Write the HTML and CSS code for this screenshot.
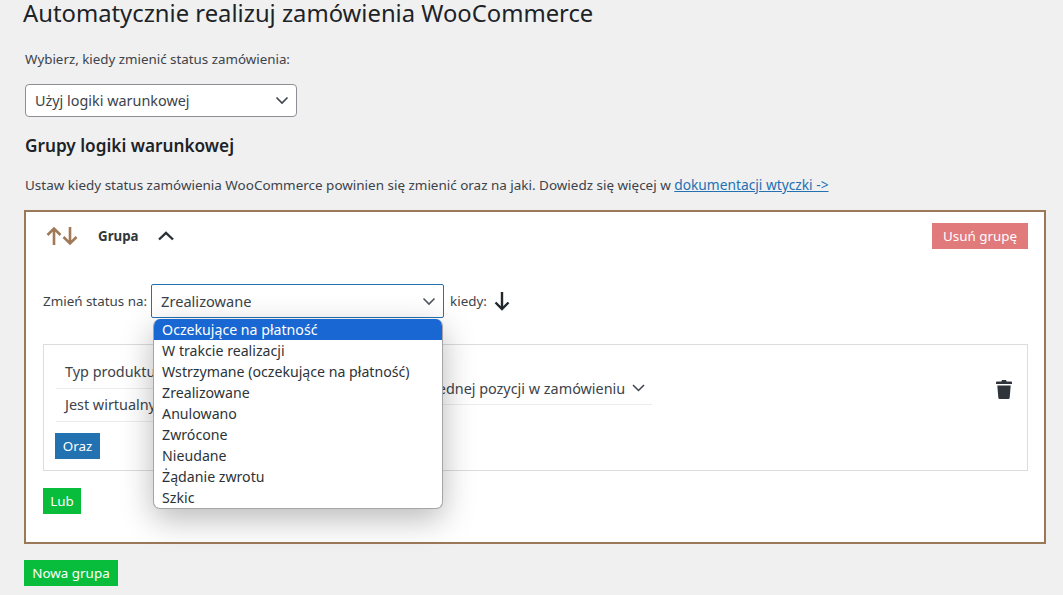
FILE: index.html
```html
<!DOCTYPE html>
<html lang="pl">
<head>
<meta charset="utf-8">
<title>Automatycznie realizuj zamówienia WooCommerce</title>
<link rel="stylesheet" href="styles.css">
</head>
<body>
<main class="page">
  <h1 class="title">Automatycznie realizuj zamówienia WooCommerce</h1>
  <p class="lead">Wybierz, kiedy zmienić status zamówienia:</p>
  <div class="select mode">
    <span>Użyj logiki warunkowej</span>
    <svg class="chev" width="14" height="9" viewBox="0 0 14 9"><path d="M1.500 1.500 7 7l5.500-5.500" fill="none" stroke="#3c434a" stroke-width="1.600"/></svg>
  </div>
  <h2 class="subtitle">Grupy logiki warunkowej</h2>
  <p class="intro">Ustaw kiedy status zamówienia WooCommerce powinien się zmienić oraz na jaki. Dowiedz się więcej w <a href="#">dokumentacji wtyczki -&gt;</a></p>

  <section class="group">
    <header class="group-head">
      <svg class="sort" width="34" height="20" viewBox="0 0 34 20"><path d="M9 19V2.500M2.500 9 9 2.500 15.500 9M25 1v16.500M18.500 11 25 17.500 31.500 11" fill="none" stroke="#a07a58" stroke-width="2.600"/></svg>
      <strong class="group-name">Grupa</strong>
      <svg class="collapse" width="16" height="10" viewBox="0 0 16 10"><path d="M1 8.500 8 1.800l7 6.700" fill="none" stroke="#2c3338" stroke-width="2.400"/></svg>
      <button class="btn danger">Usuń grupę</button>
    </header>

    <div class="status-row">
      <span>Zmień status na:</span>
      <div class="status-wrap">
        <div class="select status">
          <span>Zrealizowane</span>
          <svg class="chev" width="14" height="9" viewBox="0 0 14 9"><path d="M1.500 1.500 7 7l5.500-5.500" fill="none" stroke="#50575e" stroke-width="1.600"/></svg>
        </div>
        <ul class="menu">
          <li class="active">Oczekujące na płatność</li>
          <li>W trakcie realizacji</li>
          <li>Wstrzymane (oczekujące na płatność)</li>
          <li>Zrealizowane</li>
          <li>Anulowano</li>
          <li>Zwrócone</li>
          <li>Nieudane</li>
          <li>Żądanie zwrotu</li>
          <li>Szkic</li>
        </ul>
      </div>
      <span class="when">kiedy:</span>
      <svg class="down" width="16" height="20" viewBox="0 0 16 20"><path d="M8 1v17M1.500 11.500 8 18l6.500-6.500" fill="none" stroke="#23282d" stroke-width="2.400"/></svg>
    </div>

    <div class="rules">
      <div class="rules-main">
        <div class="rules-cols">
          <div class="conds">
            <div class="cond">Typ produktu</div>
            <div class="cond">Jest wirtualny</div>
          </div>
          <div class="qualifier">
            <span>w jednej pozycji w zamówieniu</span>
            <svg width="13" height="8" viewBox="0 0 13 8"><path d="M1 1l5.500 5.500L12 1" fill="none" stroke="#3c434a" stroke-width="1.500"/></svg>
          </div>
        </div>
        <button class="btn blue">Oraz</button>
      </div>
      <svg class="trash" width="16" height="19" viewBox="0 0 16 19"><path d="M6 0h4l.6 1.500H15a1 1 0 0 1 1 1V4H0V2.500a1 1 0 0 1 1-1h4.400z" fill="#2f343a"/><path d="M1.300 5.500h13.400l-1 12a1.500 1.500 0 0 1-1.500 1.500H3.800a1.500 1.500 0 0 1-1.500-1.500z" fill="#2f343a"/></svg>
    </div>

    <button class="btn green or">Lub</button>
  </section>

  <button class="btn green new">Nowa grupa</button>
</main>
</body>
</html>
```

FILE: styles.css
```css
* { box-sizing: border-box; }
html, body { margin: 0; height: 595px; overflow: hidden; background: #f0f0f1; }
body {
  font-family: "Noto Sans", "Open Sans", "Liberation Sans", sans-serif;
  font-size: 13.4px;
  color: #3c434a;
}
.page { padding: 0 17px 0 24px; }
.title {
  margin: 0 0 0 -1px;
  font-size: 23.8px;
  line-height: 26px;
  font-weight: 400;
  color: #1d2327;
}
.lead { margin: 23px 0 0 1px; line-height: 20px; font-size: 13.35px; }
.select {
  display: flex;
  align-items: center;
  justify-content: space-between;
  background: #fff;
  border-radius: 4px;
}
.mode {
  width: 272px;
  height: 33px;
  margin: 15px 0 0 1px;
  padding: 0 7px 0 9px;
  border: 1px solid #8c8f94;
  font-size: 14.4px;
}
.subtitle {
  margin: 17px 0 0 1px;
  font-size: 17.2px;
  line-height: 24px;
  font-weight: 600;
  color: #1d2327;
}
.intro { margin: 17px 0 0 1px; line-height: 20px; font-size: 13.46px; }
.intro a { color: #2271b1; font-size: 13.75px; }
.group {
  position: relative;
  width: 1022px;
  height: 334px;
  margin-top: 15px;
  padding: 11px 16px 0 17px;
  background: #fff;
  border: 2px solid #9b7858;
}
.group-head { display: flex; align-items: center; height: 26px; }
.sort { margin-left: 2px; }
.group-name { margin-left: 19px; font-size: 13.3px; font-weight: 700; color: #32373c; }
.collapse { margin-left: 19px; }
.btn {
  border: 0;
  border-radius: 0;
  font: inherit;
  color: #fff;
  height: 26px;
  padding: 0 8px;
}
.danger { margin-left: auto; background: #e07a7b; width: 96px; padding: 0; }
.status-row {
  display: flex;
  align-items: center;
  gap: 4px;
  margin-top: 35px;
  height: 34px;
}
.status-wrap { position: relative; }
.status {
  width: 293px;
  height: 34px;
  padding: 0 7px 0 9px;
  border: 1px solid #2271b1;
  border-radius: 2px;
  font-size: 14.6px;
}
.menu {
  position: absolute;
  z-index: 5;
  top: 35px;
  left: 2px;
  width: 290px;
  height: 190px;
  margin: 0;
  padding: 0;
  list-style: none;
  font-size: 14.15px;
  line-height: 21px;
  color: #2c3338;
  background: #fff;
  border: 1px solid #a5a5a5;
  border-top: 0;
  border-radius: 7px;
  overflow: hidden;
  box-shadow: 0 10px 32px rgba(0, 0, 0, .28);
}
.menu li { padding-left: 8px; white-space: nowrap; }
.menu .active { background: #1967d2; color: #fff; }
.when { margin-left: 2px; }
.down { margin-left: 3px; }
.rules {
  display: flex;
  justify-content: space-between;
  width: 985px;
  height: 127px;
  margin-top: 26px;
  padding: 11px 15px 10px 12px;
  border: 1px solid #dcdcde;
}
.rules-cols { display: flex; font-size: 14.4px; }
.conds { width: 360px; }
.cond {
  height: 33px;
  padding: 6px 9px 0;
  border-bottom: 1px solid #ececec;
}
.qualifier {
  display: flex;
  align-items: center;
  gap: 7px;
  width: 236px;
  height: 33px;
  margin-top: 16px;
  padding-left: 3px;
  border-bottom: 1px solid #ececec;
  white-space: nowrap;
}
.blue { display: block; margin-top: 11px; margin-left: -1px; background: #2271b1; width: 45px; padding: 0; }
.trash { margin-top: 24px; }
.green { background: #08bd3c; }
.or { display: block; width: 38px; padding: 0; margin-top: 17px; }
.new { display: block; margin-top: 16px; width: 94px; padding: 0; }
```
